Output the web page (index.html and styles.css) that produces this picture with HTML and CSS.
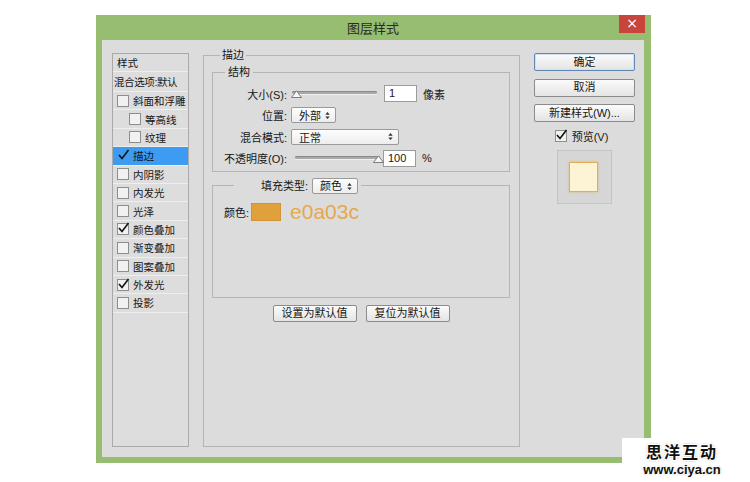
FILE: index.html
```html
<!DOCTYPE html>
<html lang="zh-CN">
<head>
    <meta charset="UTF-8">
    <title>图层样式</title>
    <link rel="stylesheet" href="styles.css">
</head>
<body>
    <div class="window">
        <div class="titlebar">
            <span class="title">图层样式</span>
            <span class="close">×</span>
        </div>
        <div class="dialog">
            <!-- style list on the left -->
            <ul class="styles">
                <li class="head">样式</li>
                <li class="blend">混合选项:默认</li>
                <li><span class="cb"></span>斜面和浮雕</li>
                <li class="sub"><span class="cb"></span>等高线</li>
                <li class="sub"><span class="cb"></span>纹理</li>
                <li class="sel"><span class="cb on"><svg viewBox="0 0 13 13"><polyline points="2,7 5,10.5 11.5,2"/></svg></span>描边</li>
                <li><span class="cb"></span>内阴影</li>
                <li><span class="cb"></span>内发光</li>
                <li><span class="cb"></span>光泽</li>
                <li><span class="cb on"><svg viewBox="0 0 13 13"><polyline points="2,7 5,10.5 11.5,2"/></svg></span>颜色叠加</li>
                <li><span class="cb"></span>渐变叠加</li>
                <li><span class="cb"></span>图案叠加</li>
                <li><span class="cb on"><svg viewBox="0 0 13 13"><polyline points="2,7 5,10.5 11.5,2"/></svg></span>外发光</li>
                <li><span class="cb"></span>投影</li>
            </ul>

            <div class="main">
                <fieldset class="stroke">
                    <legend>描边</legend>
                    <fieldset class="struct">
                        <legend>结构</legend>
                        <div class="row">
                            <label>大小(S):</label>
                            <div class="slider"><div class="track"></div><svg class="thumb left" viewBox="0 0 11 8"><polygon points="0.5,7.5 5.5,0.8 10.5,7.5"/></svg></div>
                            <div class="num">1</div>
                            <span class="unit">像素</span>
                        </div>
                        <div class="row">
                            <label>位置:</label>
                            <div class="select w45"><span>外部</span><svg viewBox="0 0 5 8"><polygon points="0,3 2.5,0 5,3"/><polygon points="0,5 2.5,8 5,5"/></svg></div>
                        </div>
                        <div class="row">
                            <label>混合模式:</label>
                            <div class="select w108"><span>正常</span><svg viewBox="0 0 5 8"><polygon points="0,3 2.5,0 5,3"/><polygon points="0,5 2.5,8 5,5"/></svg></div>
                        </div>
                        <div class="row">
                            <label>不透明度(O):</label>
                            <div class="slider op"><div class="track"></div><svg class="thumb right" viewBox="0 0 11 8"><polygon points="0.5,7.5 5.5,0.8 10.5,7.5"/></svg></div>
                            <div class="num">100</div>
                            <span class="unit">%</span>
                        </div>
                    </fieldset>

                    <fieldset class="fill">
                        <legend><span class="fill-label">填充类型:</span><span class="select w46"><span>颜色</span><svg viewBox="0 0 5 8"><polygon points="0,3 2.5,0 5,3"/><polygon points="0,5 2.5,8 5,5"/></svg></span></legend>
                        <div class="color-row">
                            <span>颜色:</span>
                            <span class="swatch"></span>
                            <span class="hex">e0a03c</span>
                        </div>
                    </fieldset>

                    <div class="defaults">
                        <button type="button" class="btn">设置为默认值</button>
                        <button type="button" class="btn">复位为默认值</button>
                    </div>
                </fieldset>
            </div>

            <div class="side">
                <button type="button" class="btn big primary">确定</button>
                <button type="button" class="btn big">取消</button>
                <button type="button" class="btn big">新建样式(W)...</button>
                <div class="preview-check"><span class="cb on"><svg viewBox="0 0 13 13"><polyline points="2,7 5,10.5 11.5,2"/></svg></span>预览(V)</div>
                <div class="preview"><div class="preview-swatch"></div></div>
            </div>
        </div>
    </div>

    <div class="watermark">
        <div class="wm-name">思洋互动</div>
        <div class="wm-url">www.ciya.cn</div>
    </div>
</body>
</html>
```

FILE: styles.css
```css
body{
    margin: 0;
    background: #ffffff;
    font-family: "Liberation Sans", "Noto Sans CJK SC", sans-serif;
    font-size: 11px;
    color: #161616;
}
.window{
    width: 555px;
    height: 448px;
    margin: 15px 0 0 96px;
    padding: 0 7px 6px 6px;
    box-sizing: border-box;
    background: #97bd70;
    display: flex;
    flex-direction: column;
}
.titlebar{
    height: 25px;
    display: grid;
    grid-template-columns: 1fr auto 1fr;
    align-items: center;
}
.title{
    grid-column: 2;
    font-size: 13px;
    color: #2a2a2a;
}
.close{
    grid-column: 3;
    justify-self: end;
    align-self: start;
    width: 26px;
    height: 18px;
    margin-right: -1px;
    background: #c8453b;
    color: #fff;
    font-family: "DejaVu Sans", sans-serif;
    font-size: 14px;
    line-height: 17px;
    text-align: center;
}
.dialog{
    flex: 1;
    background: #dcdcdc;
    display: flex;
    padding: 8px 0 10px 10px;
}

/* left list */
.styles{
    list-style: none;
    margin: 5px 0 0 0;
    padding: 0;
    width: 77px;
    box-sizing: border-box;
    border: 1px solid #a9a9a9;
    background: #dddddd;
    font-size: 10.5px;
    overflow: hidden;
}
.styles li{
    height: 18.4px;
    box-sizing: border-box;
    border-bottom: 1px solid #eeeeee;
    display: flex;
    align-items: center;
    white-space: nowrap;
}
.styles .head{
    height: 18px;
    padding-left: 4px;
}
.styles .blend{
    height: 20px;
    padding-left: 1px;
    letter-spacing: -0.4px;
}
.styles .sel{
    background: #3d9cf2;
}
.cb{
    position: relative;
    flex: none;
    width: 10px;
    height: 10px;
    border: 1px solid #8e8e8e;
    background: #f1f1f1;
    margin: 0 4px 0 4px;
}
.styles .sub .cb{
    margin-left: 16px;
}
.styles .sel .cb{
    border-color: transparent;
    background: transparent;
}
.cb svg{
    position: absolute;
    left: -1px;
    top: -3px;
    width: 13px;
    height: 13px;
}
.cb polyline{
    fill: none;
    stroke: #111;
    stroke-width: 1.6;
}

/* middle */
.main{
    width: 317px;
    margin-left: 14px;
    display: flex;
    flex-direction: column;
}
fieldset{
    margin: 0;
    padding: 0;
    min-width: 0;
    border: 1px solid #b5b5b5;
}
legend{
    padding: 0 2px;
    line-height: 14px;
}
.stroke{
    flex: 1;
    padding: 0 9px 0 8px;
}
.stroke > legend{
    margin-left: 8px;
}
.struct{
    margin-top: 3px;
    padding: 6px 0 0 0;
}
.struct > legend{
    margin-left: 12px;
    padding: 0 3px;
}
.row{
    display: flex;
    align-items: center;
    height: 17px;
    margin-bottom: 4.5px;
}
.row label{
    width: 78px;
    padding-right: 4px;
    box-sizing: border-box;
    text-align: right;
    white-space: nowrap;
}
.slider{
    position: relative;
    width: 86px;
    height: 17px;
}
.slider.op{
    margin-left: 3px;
}
.track{
    position: absolute;
    left: 1px;
    right: 0;
    top: 6px;
    height: 3px;
    border-radius: 2px;
    background: #a9a9a9;
    box-shadow: inset 0 1px 0 #8a8a8a, 0 1px 0 #f0f0f0;
}
.thumb{
    position: absolute;
    top: 5px;
    width: 11px;
    height: 8px;
}
.thumb.left{ left: 0; }
.thumb.right{ right: -4px; }
.thumb polygon{
    fill: #f6f6f6;
    stroke: #7d7d7d;
    stroke-width: 1;
}
.num{
    width: 33px;
    height: 17px;
    margin-left: 7px;
    box-sizing: border-box;
    border: 1px solid #9b9b9b;
    background: #fff;
    padding-left: 4px;
    line-height: 15px;
}
.slider.op + .num{
    margin-left: 3px;
}
.unit{
    margin-left: 6px;
}
.select{
    height: 16px;
    box-sizing: border-box;
    border: 1px solid #9a9a9a;
    border-radius: 2px;
    background: linear-gradient(#fdfdfd, #ededed);
    display: flex;
    align-items: center;
    justify-content: space-between;
    padding: 0 5px 0 7px;
}
.select svg{
    width: 5px;
    height: 7px;
    fill: #333;
}
.w45{ width: 45px; }
.w108{ width: 108px; }
.w46{
    display: inline-flex;
    vertical-align: middle;
    width: 46px;
    margin-left: 4px;
}
.fill{
    margin-top: 5px;
    padding: 9px 0 76px 11px;
}
.fill > legend{
    margin-left: 10px;
    padding: 0 3px 0 27px;
    line-height: 16px;
}
.fill-label{
    vertical-align: middle;
}
.color-row{
    display: flex;
    align-items: center;
    height: 18px;
}
.swatch{
    width: 30px;
    height: 18px;
    margin-left: 2px;
    box-sizing: border-box;
    background: #e0a03c;
    border: 1px solid #d0933a;
}
.hex{
    margin-left: 9px;
    font-size: 21px;
    line-height: 18px;
    color: #e4a84f;
}
.defaults{
    display: flex;
    justify-content: center;
    gap: 9px;
    margin-top: 7px;
}
.btn{
    width: 84px;
    height: 17px;
    padding: 0;
    border: 1px solid #8b8b8b;
    border-radius: 2px;
    background: linear-gradient(#fbfbfb, #e4e4e4);
    font-family: inherit;
    font-size: 11px;
    color: #161616;
    line-height: 15px;
}

/* right column */
.side{
    width: 101px;
    margin-left: 14px;
    padding-top: 5px;
    display: flex;
    flex-direction: column;
}
.btn.big{
    width: 101px;
    height: 18px;
    margin-bottom: 7.5px;
}
.btn.primary{
    border-color: #5f88b4;
    box-shadow: inset 0 0 0 1px #cfe0f0;
}
.preview-check{
    display: flex;
    align-items: center;
    justify-content: center;
    height: 14px;
    margin-top: -1px;
    padding-right: 6px;
}
.preview-check .cb{
    margin: 0 5px 0 0;
}
.preview{
    width: 55px;
    height: 54px;
    margin: 7px auto 0;
    box-sizing: border-box;
    border: 1px solid #c4c4c4;
    background: #d6d6d6;
    display: flex;
    align-items: center;
    justify-content: center;
}
.preview-swatch{
    width: 29px;
    height: 30px;
    margin-right: 2px;
    box-sizing: border-box;
    border: 1px solid #e4ad55;
    background: #fdf4d6;
    box-shadow: 0 0 2px rgba(224, 160, 60, 0.6);
}

/* watermark in the corner */
.watermark{
    position: absolute;
    left: 622px;
    top: 438px;
    width: 128px;
    height: 44px;
    background: #fff;
    padding: 5px 8px 0 0;
    box-sizing: border-box;
    text-align: center;
    font-family: "Liberation Sans", "Noto Sans CJK SC", sans-serif;
    font-weight: bold;
    color: #111;
}
.wm-name{
    font-size: 16px;
    line-height: 19px;
    letter-spacing: 2px;
    text-shadow: 1px 1px 0 #fff, -1px -1px 0 #fff, 1px -1px 0 #fff, -1px 1px 0 #fff, 0 0 3px #777;
}
.wm-url{
    font-size: 13px;
    line-height: 15px;
    text-shadow: 1px 1px 0 #fff, -1px -1px 0 #fff, 0 0 2px #666;
}
```
